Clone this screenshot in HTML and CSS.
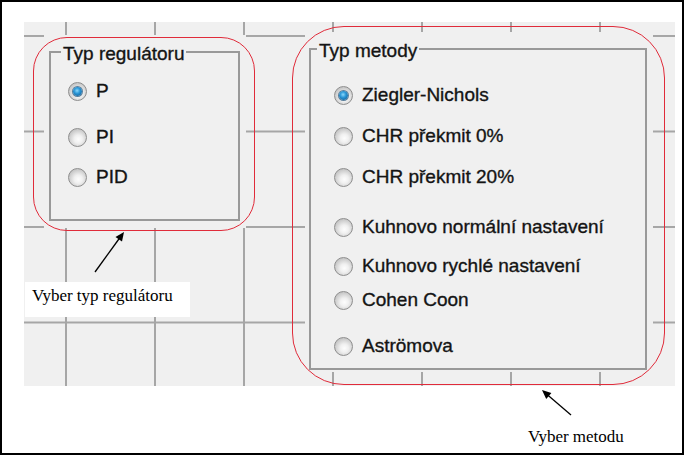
FILE: index.html
```html
<!DOCTYPE html>
<html lang="cs">
<head>
<meta charset="utf-8">
<title>Typ regulátoru</title>
<link rel="stylesheet" href="styles.css">
</head>
<body>
  <div class="canvas">
    <div class="cover cover-left">
      <fieldset class="group group-left">
        <legend class="legend legend-left">Typ regulátoru</legend>
        <div class="opt m15"><span class="radio on"></span><span class="lbl">P</span></div>
        <div class="opt m24"><span class="radio"></span><span class="lbl">PI</span></div>
        <div class="opt m18"><span class="radio"></span><span class="lbl">PID</span></div>
      </fieldset>
    </div>
    <div class="cover cover-right">
      <fieldset class="group group-right">
        <legend class="legend legend-right">Typ metody</legend>
        <div class="opt m22"><span class="radio on"></span><span class="lbl">Ziegler-Nichols</span></div>
        <div class="opt m19"><span class="radio"></span><span class="lbl">CHR překmit 0%</span></div>
        <div class="opt m19"><span class="radio"></span><span class="lbl">CHR překmit 20%</span></div>
        <div class="opt m28"><span class="radio"></span><span class="lbl">Kuhnovo normální nastavení</span></div>
        <div class="opt m17"><span class="radio"></span><span class="lbl">Kuhnovo rychlé nastavení</span></div>
        <div class="opt m12"><span class="radio"></span><span class="lbl">Cohen Coon</span></div>
        <div class="opt m24"><span class="radio"></span><span class="lbl">Aströmova</span></div>
      </fieldset>
    </div>
  </div>

  <div class="ring ring-left"></div>
  <div class="ring ring-right"></div>

  <svg class="arrows" width="680" height="451" viewBox="0 0 680 451" aria-hidden="true">
    <line x1="93" y1="270" x2="118" y2="235.5" stroke="#000" stroke-width="1.3"/>
    <polygon points="122,230 120,239.6 113.5,234.9" fill="#000"/>
    <line x1="569" y1="413" x2="544.5" y2="392" stroke="#000" stroke-width="1.3"/>
    <polygon points="540,388 549.4,390.9 544.2,396.9" fill="#000"/>
  </svg>

  <div class="note note-left">Vyber typ regulátoru</div>
  <div class="note note-right">Vyber metodu</div>
</body>
</html>
```
FILE: styles.css
```css
html, body {
  margin: 0;
  padding: 0;
}
body {
  position: relative;
  width: 684px;
  height: 455px;
  box-sizing: border-box;
  border: 2px solid #000;
  background: #fff;
  padding: 20px 0 0 22px;
  overflow: hidden;
  font-family: "Liberation Sans", Arial, sans-serif;
}
.canvas {
  width: 651px;
  height: 364px;
  display: flex;
  align-items: flex-start;
  background-color: #f0f0f0;
  background-image:
    linear-gradient(90deg, #a6a6a6 2px, transparent 2px),
    linear-gradient(#a6a6a6 2px, transparent 2px);
  background-size: 89px 95.5px, 89px 95.5px;
  background-position: 41px 13px, 41px 13px;
}
.cover {
  background: #f0f0f0;
  flex: none;
}
.cover-left {
  margin: 13px 0 0 20px;
  width: 202px;
  height: 193px;
}
.cover-right {
  margin: 10px 0 0 59px;
  width: 348px;
  height: 340px;
}
.group {
  box-sizing: border-box;
  margin: 4px 0 0 5px;
  padding: 0;
  border: 2px solid #999;
  min-inline-size: 0;
}
.group-left {
  width: 191px;
  height: 182px;
}
.group-right {
  margin-left: 4px;
  width: 338px;
  height: 334px;
}
.legend {
  font-size: 19px;
  line-height: 22px;
  padding: 4px 2px 0;
  color: #141414;
  -webkit-text-stroke: 0.35px #141414;
}
.legend-left { margin-left: 10px; }
.legend-right { margin-left: 6px; }

.opt {
  display: flex;
  align-items: center;
  height: 22px;
  gap: 9px;
}
.group-left .opt { padding-left: 17px; }
.group-right .opt { padding-left: 23px; }

.m12 { margin-top: 12px; }
.m15 { margin-top: 15px; }
.m17 { margin-top: 17px; }
.m18 { margin-top: 18px; }
.m19 { margin-top: 19px; }
.m22 { margin-top: 22px; }
.m24 { margin-top: 24px; }
.m28 { margin-top: 28px; }

.lbl {
  font-size: 19px;
  line-height: 22px;
  color: #141414;
  -webkit-text-stroke: 0.35px #141414;
  white-space: nowrap;
}
.radio {
  flex: none;
  width: 19px;
  height: 19px;
  box-sizing: border-box;
  border-radius: 50%;
  border: 1px solid #8e8e8e;
  background: radial-gradient(circle at 55% 60%, #fdfdfd 0, #f0f0f0 30%, #c6c6c6 72%, #dedede 100%);
  display: flex;
  align-items: center;
  justify-content: center;
}
.radio.on::after {
  content: "";
  width: 9px;
  height: 9px;
  border-radius: 50%;
  background: radial-gradient(circle at 45% 40%, #8ad8fb 0, #2a96d6 40%, #0c4f86 100%);
  box-shadow: 0 0 0 1px #5a7f9c;
}

.ring {
  position: absolute;
  box-sizing: border-box;
  border: 1px solid #e02b3a;
}
.ring-left {
  left: 31px;
  top: 35px;
  width: 222px;
  height: 194px;
  border-radius: 34px;
}
.ring-right {
  left: 290px;
  top: 24px;
  width: 373px;
  height: 359px;
  border-radius: 52px;
}
.arrows {
  position: absolute;
  left: 0;
  top: 0;
}
.note {
  position: absolute;
  font-family: "Liberation Serif", "Times New Roman", serif;
  font-size: 17px;
  line-height: 19px;
  color: #000;
  white-space: nowrap;
}
.note-left {
  left: 23px;
  top: 280px;
  width: 165px;
  height: 35px;
  box-sizing: border-box;
  padding: 4px 0 0 7px;
  background: #fff;
}
.note-right {
  left: 526px;
  top: 425px;
}
```
